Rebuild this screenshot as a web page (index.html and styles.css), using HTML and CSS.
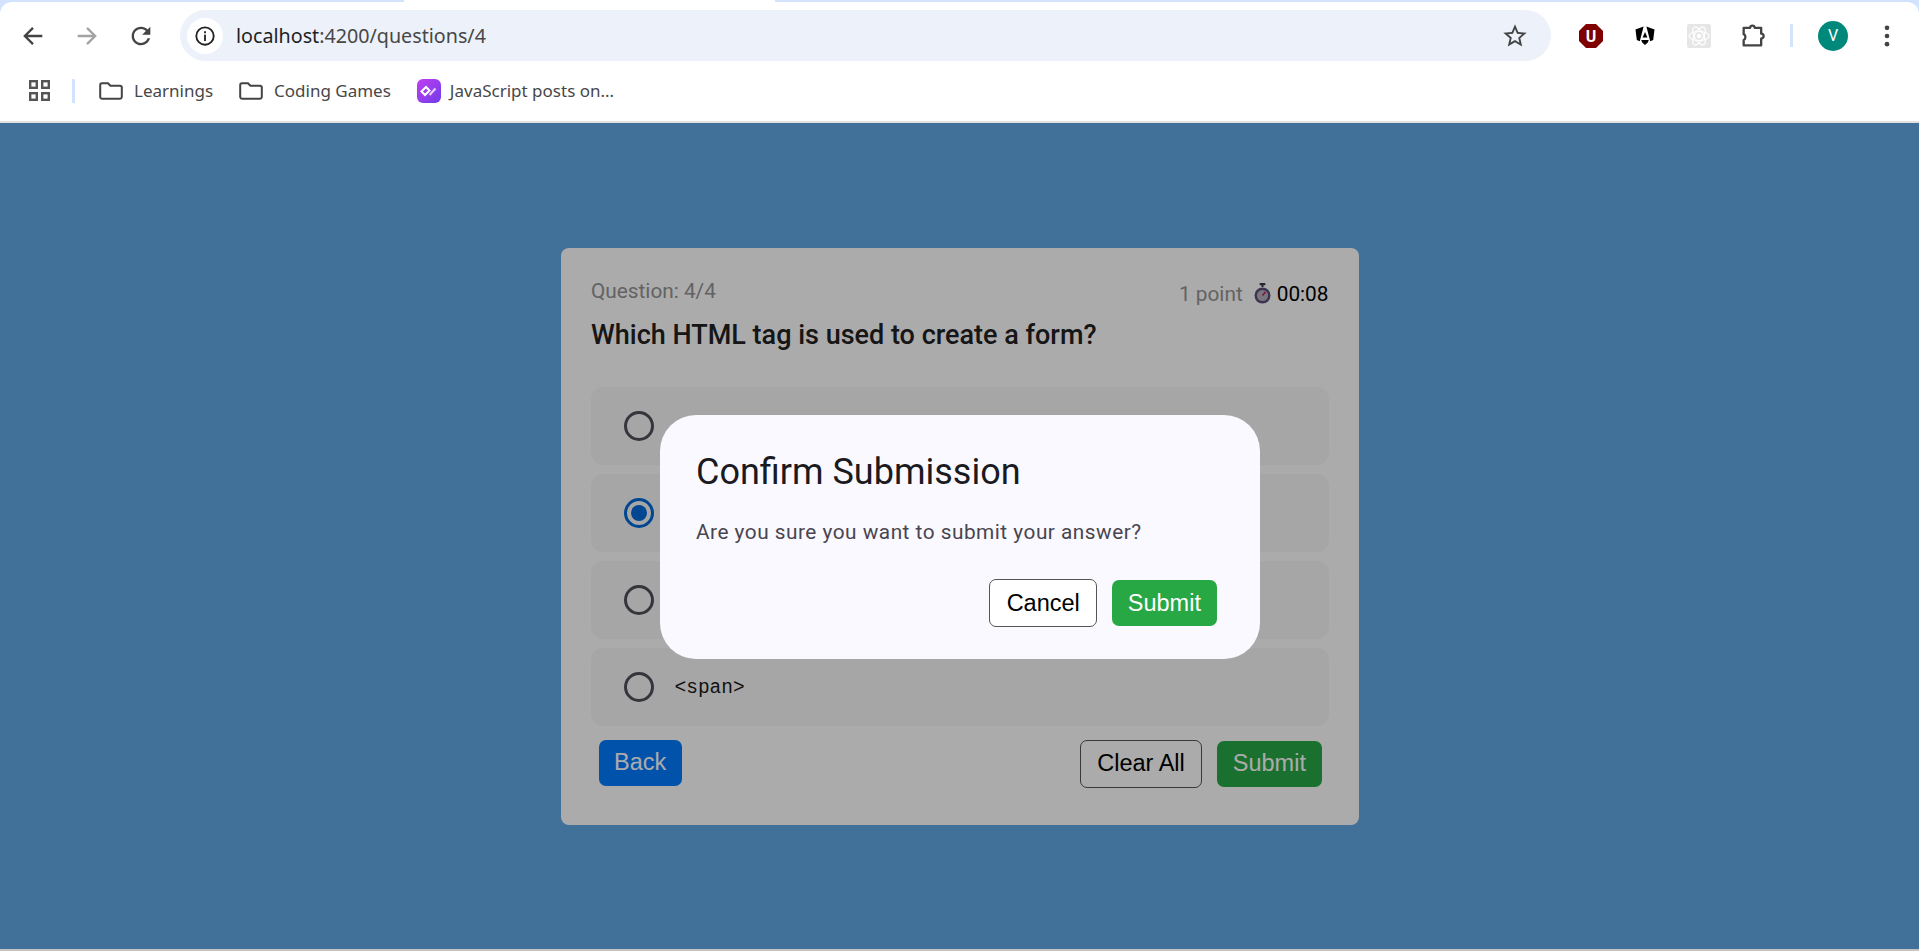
FILE: index.html
```html
<!DOCTYPE html>
<html lang="en">
<head>
  <meta charset="UTF-8" />
  <title>Quiz - localhost:4200</title>
  <link rel="stylesheet" href="styles.css">
</head>
<body>
  <div class="app">
    <header class="chrome">
      <div class="tab-gap"></div>
      <div class="toolbar">
        <button class="tool">
          <svg class="ico" viewBox="0 0 24 24"><path d="M20 12H5M12 5l-7 7 7 7" fill="none" stroke="#444" stroke-width="2"/></svg>
        </button>
        <button class="tool">
          <svg class="ico" viewBox="0 0 24 24"><path d="M4 12h15M12 5l7 7-7 7" fill="none" stroke="#a3a3a3" stroke-width="2"/></svg>
        </button>
        <button class="tool">
          <svg class="ico" viewBox="0 0 24 24"><path fill="#444" d="M17.65 6.35C16.2 4.9 14.21 4 12 4c-4.42 0-7.99 3.58-7.99 8s3.57 8 7.99 8c3.73 0 6.84-2.55 7.73-6h-2.08c-.82 2.33-3.04 4-5.65 4-3.31 0-6-2.69-6-6s2.69-6 6-6c1.66 0 3.14.69 4.22 1.78L13 11h7V4l-2.35 2.35z"/></svg>
        </button>
        <div class="omnibox">
          <span class="site-info">
            <svg class="ico-sm" viewBox="0 0 24 24"><circle cx="12" cy="12" r="9.5" fill="none" stroke="#222" stroke-width="2"/><rect x="11" y="10.5" width="2" height="7" fill="#222"/><rect x="11" y="6.8" width="2" height="2.2" fill="#222"/></svg>
          </span>
          <span class="url">localhost<span class="url-path">:4200/questions/4</span></span>
          <svg class="ico star" viewBox="0 0 24 24"><path fill="#444" d="M22 9.24l-7.19-.62L12 2 9.19 8.63 2 9.24l5.46 4.73L5.82 21 12 17.27 18.18 21l-1.63-7.03L22 9.24zM12 15.4l-3.76 2.27 1-4.28-3.32-2.88 4.38-.38L12 6.1l1.71 4.04 4.38.38-3.32 2.88 1 4.28L12 15.4z"/></svg>
        </div>
        <div class="extensions">
          <button class="tool">
            <svg class="ext" viewBox="0 0 24 24"><polygon points="7,0 17,0 24,7 24,17 17,24 7,24 0,17 0,7" fill="#800000"/><text x="12" y="18" text-anchor="middle" class="ublock-u">U</text></svg>
          </button>
          <button class="tool">
            <svg class="ext" viewBox="0 0 24 24"><path d="M10.6 2.5 2.5 5.5 3.8 16l3 1.2zM13.4 2.5l8.1 3L20.2 16l-3 1.2zM12 8l2.4 5.5H9.6zM8.2 16h7.6l-1 2.5L12 21l-2.8-2.5z" fill="#000"/></svg>
          </button>
          <button class="tool">
            <svg class="ext" viewBox="0 0 24 24"><rect width="24" height="24" rx="2" fill="#e6e6e6"/><g fill="none" stroke="#fff" stroke-width="1.2"><ellipse cx="12" cy="12" rx="10" ry="4.5"/><ellipse cx="12" cy="12" rx="10" ry="4.5" transform="rotate(60 12 12)"/><ellipse cx="12" cy="12" rx="10" ry="4.5" transform="rotate(120 12 12)"/></g><circle cx="12" cy="12" r="2.2" fill="#fff"/></svg>
          </button>
          <button class="tool">
            <svg class="ico" viewBox="0 0 24 24"><path d="M4 5h5.5c.2-2.6 3.8-2.6 4 0H19v5c2.8.2 2.8 4 0 4.2V20H4v-4.6c2-.8 2-4.2 0-5z" fill="none" stroke="#444" stroke-width="2" stroke-linejoin="round"/></svg>
          </button>
        </div>
        <span class="bar-divider"></span>
        <button class="tool avatar-btn"><span class="avatar">V</span></button>
        <button class="tool">
          <svg class="ico" viewBox="0 0 24 24"><circle cx="12" cy="5" r="2" fill="#444"/><circle cx="12" cy="12" r="2" fill="#444"/><circle cx="12" cy="19" r="2" fill="#444"/></svg>
        </button>
      </div>
      <nav class="bookmarks">
        <svg class="apps" viewBox="0 0 21 21"><g fill="none" stroke="#555" stroke-width="2.4"><rect x="1.2" y="1.2" width="6.6" height="6.6"/><rect x="13.2" y="1.2" width="6.6" height="6.6"/><rect x="1.2" y="13.2" width="6.6" height="6.6"/><rect x="13.2" y="13.2" width="6.6" height="6.6"/></g></svg>
        <span class="bm-divider"></span>
        <a class="bookmark">
          <svg class="folder" viewBox="0 0 24 18"><path d="M1.2 3a1.8 1.8 0 0 1 1.8-1.8h6l2.4 2.6H21a1.8 1.8 0 0 1 1.8 1.8v9.6a1.8 1.8 0 0 1-1.8 1.6H3a1.8 1.8 0 0 1-1.8-1.6z" fill="none" stroke="#444" stroke-width="2"/></svg>
          Learnings
        </a>
        <a class="bookmark">
          <svg class="folder" viewBox="0 0 24 18"><path d="M1.2 3a1.8 1.8 0 0 1 1.8-1.8h6l2.4 2.6H21a1.8 1.8 0 0 1 1.8 1.8v9.6a1.8 1.8 0 0 1-1.8 1.6H3a1.8 1.8 0 0 1-1.8-1.6z" fill="none" stroke="#444" stroke-width="2"/></svg>
          Coding Games
        </a>
        <a class="bookmark">
          <svg class="js-icon" viewBox="0 0 24 24"><defs><linearGradient id="jsGrad" x1="0" y1="0" x2="1" y2="1"><stop offset="0" stop-color="#c23df2"/><stop offset="1" stop-color="#6f3ce8"/></linearGradient></defs><rect width="24" height="24" rx="6" fill="url(#jsGrad)"/><path d="M4.5 12.5 9 8l3.5 3.5L8 16z" fill="none" stroke="#fff" stroke-width="2"/><path d="M12.5 16l6-6.5" fill="none" stroke="#e6ccff" stroke-width="2.2"/></svg>
          JavaScript posts on...
        </a>
      </nav>
    </header>

    <main class="page">
      <section class="quiz-card">
        <div class="quiz-head">
          <span class="quiz-count">Question: 4/4</span>
          <span class="quiz-meta">
            <span class="points">1 point</span>
            <svg class="stopwatch" viewBox="0 0 17 21"><rect x="5.5" y="0" width="6" height="2.2" rx="1" fill="#3f3550"/><rect x="7.5" y="2" width="2" height="2" fill="#3f3550"/><circle cx="8.5" cy="12.5" r="8" fill="#5b4e78"/><circle cx="8.5" cy="12.5" r="5.6" fill="#b5b0bd"/><path d="M8.5 12.5l3-3.4" stroke="#c2185b" stroke-width="1.5"/></svg>
            <span class="timer">00:08</span>
          </span>
        </div>
        <h2 class="quiz-question">Which HTML tag is used to create a form?</h2>
        <div class="options">
          <div class="option"><span class="radio"></span></div>
          <div class="option"><span class="radio checked"></span></div>
          <div class="option"><span class="radio"></span></div>
          <div class="option"><span class="radio"></span><code class="option-text">&lt;span&gt;</code></div>
        </div>
        <div class="quiz-actions">
          <button class="btn btn-blue">Back</button>
          <div class="actions-right">
            <button class="btn btn-outline">Clear All</button>
            <button class="btn btn-green">Submit</button>
          </div>
        </div>
      </section>

      <div class="overlay">
        <div class="dialog">
          <h2 class="dialog-title">Confirm Submission</h2>
          <p class="dialog-text">Are you sure you want to submit your answer?</p>
          <div class="dialog-actions">
            <button class="btn btn-outline">Cancel</button>
            <button class="btn btn-green">Submit</button>
          </div>
        </div>
      </div>
    </main>
    <div class="window-edge"></div>
  </div>
</body>
</html>
```

FILE: styles.css
```css
* {
  box-sizing: border-box;
}
body {
  margin: 0;
  font-family: 'Roboto', sans-serif;
  overflow: hidden;
}
button {
  font-family: inherit;
}
.app {
  display: flex;
  flex-direction: column;
  height: 951px;
}

/* browser chrome */
.chrome {
  background-color: #d3e3fd;
  border-bottom: 2px solid #e2e2e2;
}
.tab-gap {
  width: 371px;
  height: 2px;
  margin-left: 404px;
  background-color: #fff;
}
.toolbar {
  display: flex;
  align-items: center;
  height: 67px;
  padding: 8px 5px 8px 6px;
  background-color: #fff;
  border-radius: 12px 12px 0 0;
}
.tool {
  display: flex;
  align-items: center;
  justify-content: center;
  flex: none;
  width: 54px;
  height: 51px;
  padding: 0;
  background: none;
  border: none;
}
.ico {
  width: 28px;
  height: 28px;
}
.ico-sm {
  width: 22px;
  height: 22px;
}
.ext {
  width: 24px;
  height: 24px;
}
.ublock-u {
  font-family: 'Roboto', sans-serif;
  font-size: 16px;
  font-weight: 700;
  fill: #fff;
}
.omnibox {
  display: flex;
  align-items: center;
  flex: 1;
  height: 51px;
  margin-left: 12px;
  padding: 0 22px 0 7px;
  background-color: #ecf1fa;
  border-radius: 26px;
}
.site-info {
  display: flex;
  align-items: center;
  justify-content: center;
  width: 36px;
  height: 36px;
  background-color: #fff;
  border-radius: 50%;
}
.url {
  flex: 1;
  margin-left: 13px;
  font-family: 'Noto Sans', sans-serif;
  font-size: 19.7px;
  color: #1f1f1f;
}
.url-path {
  color: #474747;
}
.extensions {
  display: flex;
  margin-left: 13px;
}
.bar-divider {
  flex: none;
  width: 3px;
  height: 23px;
  margin-left: 10px;
  background-color: #d3e3fd;
}
.avatar-btn {
  margin-left: 13px;
}
.avatar {
  display: flex;
  align-items: center;
  justify-content: center;
  width: 30px;
  height: 30px;
  background-color: #00897b;
  border-radius: 50%;
  color: #fff;
  font-size: 16px;
}
.bookmarks {
  display: flex;
  align-items: center;
  height: 52px;
  padding: 0 0 9px 29px;
  background-color: #fff;
  font-family: 'Noto Sans', sans-serif;
  font-size: 17px;
  color: #474747;
}
.apps {
  width: 21px;
  height: 21px;
}
.bm-divider {
  width: 3px;
  height: 24px;
  margin: 0 24px 0 22px;
  background-color: #d3e3fd;
}
.bookmark {
  display: flex;
  align-items: center;
  gap: 11px;
  margin-right: 26px;
}
.folder {
  width: 24px;
  height: 18px;
}
.js-icon {
  width: 24px;
  height: 24px;
  margin-right: -2px;
}

/* quiz page */
.page {
  position: relative;
  display: flex;
  flex: 1;
  align-items: center;
  justify-content: center;
  background-color: #61a7e4;
}
.window-edge {
  height: 2px;
  background-color: #c4c4c4;
}
.quiz-card {
  width: 798px;
  height: 577px;
  padding: 31px 30px 30px;
  background-color: #fff;
  border-radius: 8px;
}
.quiz-head {
  display: flex;
  justify-content: space-between;
  padding-left: 0.5px;
  font-size: 20.8px;
  line-height: 24px;
}
.quiz-count {
  color: #949494;
}
.quiz-meta {
  display: flex;
  align-items: center;
  margin-top: 3px;
}
.points {
  color: #949494;
}
.stopwatch {
  width: 17px;
  height: 21px;
  margin: 0 6px 0 11px;
}
.timer {
  color: #000;
}
.quiz-question {
  margin: 12px 0 0;
  padding-left: 0.5px;
  font-size: 27px;
  font-weight: 500;
  line-height: 34px;
  color: #222;
}
.options {
  display: flex;
  flex-direction: column;
  gap: 9px;
  margin-top: 35px;
}
.option {
  display: flex;
  align-items: center;
  gap: 21px;
  height: 78px;
  padding-left: 33px;
  background-color: #f8f8f8;
  border-radius: 12px;
}
.radio {
  display: flex;
  align-items: center;
  justify-content: center;
  width: 30px;
  height: 30px;
  border: 3px solid #50505a;
  border-radius: 50%;
}
.radio.checked {
  border-color: #0069d9;
}
.radio.checked::after {
  content: "";
  width: 16px;
  height: 16px;
  background-color: #0069d9;
  border-radius: 50%;
}
.option-text {
  margin-top: 2px;
  font-family: 'Liberation Mono', monospace;
  font-size: 19.5px;
  color: #1a1a1a;
}
.quiz-actions {
  display: flex;
  align-items: flex-start;
  justify-content: space-between;
  margin-top: 14px;
  padding: 0 7px 0 8px;
}
.actions-right {
  display: flex;
  align-items: center;
  gap: 15px;
}
.btn {
  height: 46px;
  padding: 0 15.6px;
  border: none;
  border-radius: 7px;
  font-family: 'Liberation Sans', sans-serif;
  font-size: 23.5px;
}
.btn-blue {
  background-color: #007bff;
  color: #fff;
}
.btn-green {
  background-color: #28a745;
  color: #fff;
}
.btn-outline {
  height: 48px;
  padding: 0 16.4px;
  background-color: #fff;
  border: 1px solid #555;
  color: #000;
}

/* modal */
.overlay {
  position: absolute;
  inset: 0;
  display: flex;
  align-items: center;
  justify-content: center;
  background-color: rgba(0, 0, 0, 0.33);
}
.dialog {
  width: 600px;
  height: 244px;
  margin-top: 2px;
  padding: 36px 43px 32px 36.5px;
  background-color: #f9f9ff;
  border-radius: 36px;
}
.dialog-title {
  margin: 0;
  font-size: 36px;
  font-weight: 400;
  line-height: 42px;
  color: #1a1a1f;
}
.dialog-text {
  margin: 27px 0 0;
  font-size: 20.8px;
  line-height: 24px;
  letter-spacing: 0.5px;
  color: #49454f;
}
.dialog-actions {
  display: flex;
  align-items: center;
  justify-content: flex-end;
  gap: 15px;
  margin-top: 35px;
}
```
